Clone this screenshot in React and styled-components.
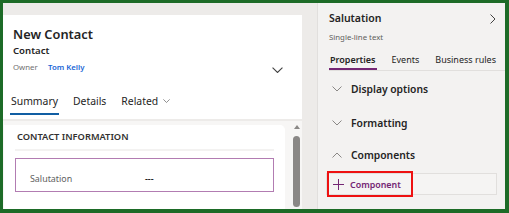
import React from "react";
import styled, { createGlobalStyle } from "styled-components";

const GlobalStyle = createGlobalStyle`
  html, body {
    margin: 0;
    padding: 0;
    background: #ffffff;
  }
  * {
    box-sizing: border-box;
  }
  body {
    font-family: "Noto Sans", "Open Sans", sans-serif;
    color: #242424;
  }
`;

const Frame = styled.div`
  width: 509px;
  height: 213px;
  border-style: solid;
  border-color: #1d6b27;
  border-width: 3px 4px 4px 3px;
  display: flex;
  overflow: hidden;
  background: #edebe9;
`;

const FormArea = styled.div`
  width: 314px;
  flex-shrink: 0;
  padding: 12px 15px 0 0;
  display: flex;
  flex-direction: column;
`;

const FormPanel = styled.div`
  flex: 1;
  background: #ffffff;
  display: flex;
  flex-direction: column;
  overflow: hidden;
`;

const FormHeader = styled.div`
  padding: 9px 0 0 10px;
  border-bottom: 2px solid #edebe9;
  height: 106px;
  flex-shrink: 0;
  display: flex;
  flex-direction: column;
`;

const Title = styled.div`
  font-size: 12.8px;
  font-weight: 600;
  line-height: 20px;
  color: #242424;
`;

const EntityName = styled.div`
  font-size: 9.6px;
  font-weight: 600;
  line-height: 14px;
  color: #242424;
`;

const OwnerRow = styled.div`
  display: flex;
  align-items: center;
  margin-top: 2px;
  height: 14px;
  font-size: 7.8px;
  line-height: 14px;
  padding-right: 19px;
`;

const OwnerLabel = styled.span`
  color: #707070;
  width: 35px;
`;

const OwnerLink = styled.span`
  color: #1a66d6;
  font-weight: 600;
`;

const HeaderChevron = styled.span`
  margin-left: auto;
  display: flex;
  margin-top: 6px;
`;

const FormTabs = styled.div`
  display: flex;
  gap: 13px;
  margin-top: 18px;
  margin-left: -3px;
`;

const FormTab = styled.div`
  font-size: 10.4px;
  line-height: 18px;
  color: #242424;
  padding: 0 1px 3px;
  border-bottom: 2px solid ${(p) => (p.$active ? "#115ea3" : "transparent")};
  display: flex;
  align-items: center;
  gap: 5px;
`;

const FormBody = styled.div`
  flex: 1;
  display: flex;
  background: #f7f6f5;
`;

const Card = styled.div`
  flex: 1;
  margin: 4px 0 0 1px;
  background: #ffffff;
  border-radius: 0 5px 0 0;
  padding: 4px 11px 0 11px;
  overflow: hidden;
`;

const SectionTitle = styled.div`
  font-size: 9.3px;
  font-weight: 600;
  line-height: 15px;
  color: #323130;
  text-transform: uppercase;
  padding: 0 0 5px 2px;
  border-bottom: 2px solid #f3f2f1;
`;

const FieldRow = styled.div`
  display: flex;
  align-items: center;
  height: ${(p) => (p.$selected ? "34px" : "30px")};
  margin-top: ${(p) => (p.$selected ? "7px" : "6px")};
  padding: ${(p) => (p.$selected ? "6px" : "0")} 0 0 14px;
  border: 1px solid ${(p) => (p.$selected ? "#b27cb2" : "transparent")};
  font-size: 8.9px;
`;

const FieldLabel = styled.span`
  width: 115px;
  color: #616161;
`;

const FieldValue = styled.span`
  color: #242424;
  font-weight: 600;
`;

const ScrollTrack = styled.div`
  width: 17px;
  padding: 4px 0 0 8px;
  display: flex;
  flex-direction: column;
  align-items: flex-start;
`;

const ScrollArrow = styled.div`
  width: 0;
  height: 0;
  margin-left: 1px;
  border-left: 3px solid transparent;
  border-right: 3px solid transparent;
  border-bottom: 4px solid #8a8886;
`;

const ScrollThumb = styled.div`
  width: 7px;
  height: 71px;
  margin-top: 7px;
  border-radius: 4px;
  background: #8a8886;
`;

const SidePanel = styled.div`
  flex: 1;
  min-width: 0;
  background: #f3f2f1;
  border-left: 1px solid #e1dfdd;
  padding: 6px 0 0 11px;
  display: flex;
  flex-direction: column;
`;

const SideTitleRow = styled.div`
  display: flex;
  align-items: center;
  justify-content: space-between;
  padding-right: 9px;
`;

const SideTitle = styled.div`
  font-size: 10.5px;
  font-weight: 600;
  line-height: 19px;
  color: #242424;
`;

const SideSubtitle = styled.div`
  font-size: 7.8px;
  line-height: 14px;
  color: #605e5c;
  margin-top: 2px;
`;

const SideTabs = styled.div`
  display: flex;
  gap: 14px;
  margin-top: 8px;
  border-bottom: 1px solid #e1dfdd;
`;

const SideTab = styled.div`
  font-size: ${(p) => (p.$active ? "9px" : "9px")};
  line-height: 15px;
  font-weight: ${(p) => (p.$active ? 600 : 400)};
  color: #242424;
  padding: 0 1px 1px;
  border-bottom: 2px solid ${(p) => (p.$active ? "#742774" : "transparent")};
  white-space: nowrap;
`;

const SectionHeader = styled.div`
  display: flex;
  align-items: center;
  gap: 9px;
  height: 32px;
  margin-top: ${(p) => (p.$open ? "0" : "2px")};
  padding-left: 3px;
  font-size: 10.3px;
  font-weight: 600;
  color: #242424;
`;

const AddButtonWrap = styled.div`
  position: relative;
  margin: 2px 8px 0 -3px;
`;

const AddButton = styled.div`
  height: 22px;
  display: flex;
  align-items: center;
  gap: 6px;
  padding-left: 6px;
  border: 1px solid #e1dfdd;
  background: #f5f4f3;
  font-size: 8.9px;
  font-weight: 600;
  color: #742774;
`;

const Highlight = styled.div`
  position: absolute;
  left: 1px;
  top: -2px;
  width: 86px;
  height: 26px;
  border: 2px solid #ee1111;
  pointer-events: none;
`;

const Chevron = ({ up = false, size = 10, color = "#605e5c" }) => (
  <svg width={size} height={size * 0.6} viewBox="0 0 10 6" fill="none">
    <path
      d={up ? "M0.5 5.5L5 1l4.5 4.5" : "M0.5 0.5L5 5l4.5-4.5"}
      stroke={color}
      strokeWidth="1"
    />
  </svg>
);

const ChevronRight = () => (
  <svg width="6" height="10" viewBox="0 0 6 10" fill="none">
    <path d="M0.5 0.5L5 5 0.5 9.5" stroke="#424242" strokeWidth="1" />
  </svg>
);

const PlusIcon = () => (
  <svg width="11" height="11" viewBox="0 0 11 11" fill="none">
    <path d="M5.5 0v11M0 5.5h11" stroke="#742774" strokeWidth="1" />
  </svg>
);

const sections = [
  { name: "Display options", open: false },
  { name: "Formatting", open: false },
  { name: "Components", open: true },
];

export default function App() {
  return (
    <>
      <GlobalStyle />
      <Frame>
        <FormArea>
          <FormPanel>
            <FormHeader>
              <Title>New Contact</Title>
              <EntityName>Contact</EntityName>
              <OwnerRow>
                <OwnerLabel>Owner</OwnerLabel>
                <OwnerLink>Tom Kelly</OwnerLink>
                <HeaderChevron>
                  <Chevron size={11} color="#424242" />
                </HeaderChevron>
              </OwnerRow>
              <FormTabs>
                <FormTab $active>Summary</FormTab>
                <FormTab>Details</FormTab>
                <FormTab>
                  Related <Chevron size={7} color="#616161" />
                </FormTab>
              </FormTabs>
            </FormHeader>
            <FormBody>
              <Card>
                <SectionTitle>Contact information</SectionTitle>
                <FieldRow $selected>
                  <FieldLabel>Salutation</FieldLabel>
                  <FieldValue>---</FieldValue>
                </FieldRow>
                <FieldRow>
                  <FieldLabel>First Name</FieldLabel>
                  <FieldValue>---</FieldValue>
                </FieldRow>
              </Card>
              <ScrollTrack>
                <ScrollArrow />
                <ScrollThumb />
              </ScrollTrack>
            </FormBody>
          </FormPanel>
        </FormArea>
        <SidePanel>
          <SideTitleRow>
            <SideTitle>Salutation</SideTitle>
            <ChevronRight />
          </SideTitleRow>
          <SideSubtitle>Single-line text</SideSubtitle>
          <SideTabs>
            <SideTab $active>Properties</SideTab>
            <SideTab>Events</SideTab>
            <SideTab>Business rules</SideTab>
          </SideTabs>
          {sections.map((s) => (
            <SectionHeader key={s.name} $open={s.open}>
              <Chevron up={s.open} size={10} color="#8a8886" />
              {s.name}
            </SectionHeader>
          ))}
          <AddButtonWrap>
            <AddButton>
              <PlusIcon />
              Component
            </AddButton>
            <Highlight />
          </AddButtonWrap>
        </SidePanel>
      </Frame>
    </>
  );
}
